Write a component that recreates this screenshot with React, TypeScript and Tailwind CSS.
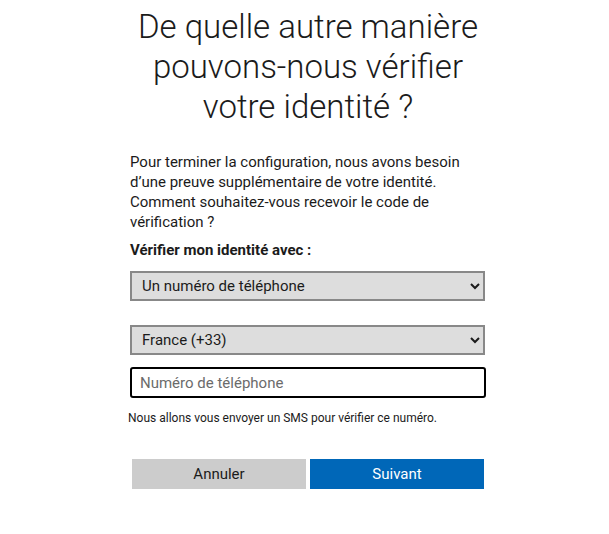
export default function App() {
  return (
    <div className="min-h-screen bg-white flex justify-center pl-[7px] font-['Roboto',sans-serif] text-[#1b1b1b]">
      <div className="w-[356px] flex flex-col pt-[7px]">
        {/* Title */}
        <h1 className="text-[33px] leading-[40px] font-light text-center text-[#1b1b1b] -mx-10">
          De quelle autre manière
          <br />
          pouvons-nous vérifier
          <br />
          votre identité ?
        </h1>

        {/* Intro */}
        <p className="mt-[25px] text-[15px] leading-5">
          Pour terminer la configuration, nous avons besoin d’une preuve supplémentaire de votre identité.
          Comment souhaitez-vous recevoir le code de vérification ?
        </p>

        <label className="mt-2 text-[15px] leading-5 font-bold">Vérifier mon identité avec :</label>

        <select className="mt-[11px] h-[30px] w-[355px] bg-[#dddddd] border-2 border-[#888888] pl-[6px] pr-2 text-[15px] text-[#1b1b1b] outline-none">
          <option>Un numéro de téléphone</option>
          <option>Une adresse e-mail</option>
        </select>

        <select className="mt-6 h-[30px] w-[355px] bg-[#dddddd] border-2 border-[#888888] pl-[6px] pr-2 text-[15px] text-[#1b1b1b] outline-none">
          <option>France (+33)</option>
        </select>

        <input
          type="tel"
          placeholder="Numéro de téléphone"
          className="mt-3 h-[31px] w-[356px] border-2 border-black rounded-[3px] px-[8px] text-[15px] placeholder:text-[#6b6b6b] outline-none"
        />

        <p className="mt-3 -ml-[2px] text-[12px] leading-4">
          Nous allons vous envoyer un SMS pour vérifier ce numéro.
        </p>

        {/* Actions */}
        <div className="mt-[33px] ml-[2px] w-[352px] grid grid-cols-2 gap-1">
          <button className="h-[30px] bg-[#cccccc] text-[15px] text-[#1b1b1b]">Annuler</button>
          <button className="h-[30px] bg-[#0067b8] text-[15px] text-white">Suivant</button>
        </div>
      </div>
    </div>
  );
}
